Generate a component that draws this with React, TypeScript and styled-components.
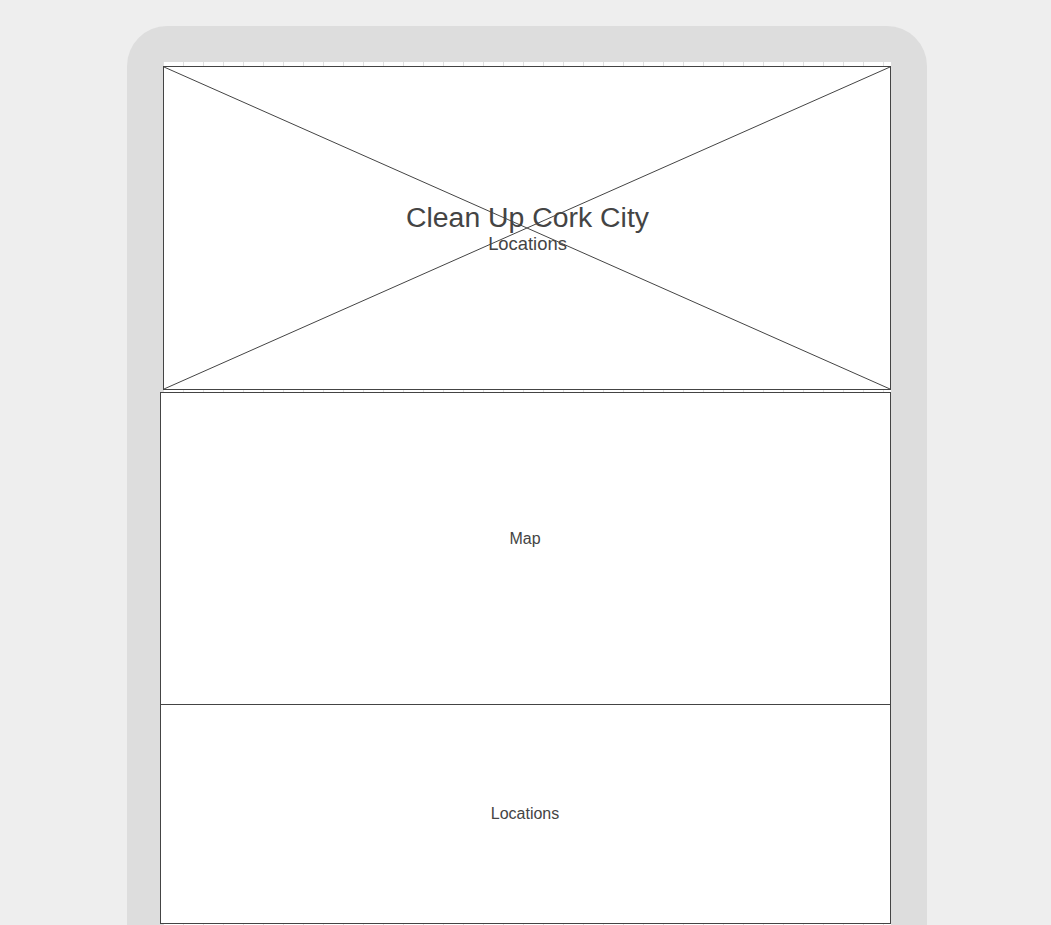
import React from 'react';
import styled, { createGlobalStyle } from 'styled-components';

const GlobalStyle = createGlobalStyle`
  html, body {
    margin: 0;
    padding: 0;
    background: #eeeeee;
    font-family: "Liberation Sans", Arial, sans-serif;
    color: #444444;
  }
`;

const Page = styled.div`
  height: 925px;
  overflow: hidden;
  display: flex;
  justify-content: center;
  padding-top: 26px;
  box-sizing: border-box;
`;

const Device = styled.div`
  width: 800px;
  height: 1000px;
  margin-left: 2px;
  background: #dddddd;
  border-radius: 40px;
  padding: 36px 36px 0 36px;
  box-sizing: border-box;
`;

const Screen = styled.div`
  height: 100%;
  background-color: #ffffff;
  background-image: repeating-linear-gradient(
    to right,
    #e0e0e0 0,
    #e0e0e0 1px,
    transparent 1px,
    transparent 20px
  );
  padding-top: 4px;
  display: flex;
  flex-direction: column;
`;

const Hero = styled.header`
  position: relative;
  height: 324px;
  padding-left: 2px;
  border: 1px solid #444444;
  background: #ffffff;
  display: flex;
  flex-direction: column;
  align-items: center;
  justify-content: center;
  box-sizing: border-box;
`;

const Cross = styled.svg`
  position: absolute;
  inset: 0;
  width: 100%;
  height: 100%;
`;

const Title = styled.h1`
  position: relative;
  margin: 0;
  font-size: 28.4px;
  font-weight: 400;
  line-height: 1.1;
`;

const Subtitle = styled.p`
  position: relative;
  margin: 0;
  font-size: 18.4px;
  line-height: 1.15;
`;

const Panel = styled.section<{ $height: number; $first?: boolean; $lift?: number }>`
  height: ${(p) => p.$height}px;
  margin-left: -3px;
  margin-top: ${(p) => (p.$first ? '2px' : '-1px')};
  padding-bottom: ${(p) => (p.$lift ?? 0) * 2}px;
  border: 1px solid #444444;
  background: #ffffff;
  display: flex;
  align-items: center;
  justify-content: center;
  font-size: 16px;
  box-sizing: border-box;
`;

function App() {
  return (
    <>
      <GlobalStyle />
      <Page>
        <Device>
          <Screen>
            <Hero>
              <Cross viewBox="0 0 100 100" preserveAspectRatio="none">
                <line x1="0" y1="0" x2="100" y2="100" stroke="#444" strokeWidth="1" vectorEffect="non-scaling-stroke" />
                <line x1="100" y1="0" x2="0" y2="100" stroke="#444" strokeWidth="1" vectorEffect="non-scaling-stroke" />
              </Cross>
              <Title>Clean Up Cork City</Title>
              <Subtitle>Locations</Subtitle>
            </Hero>
            <Panel $height={313} $first $lift={10}>Map</Panel>
            <Panel $height={220}>Locations</Panel>
          </Screen>
        </Device>
      </Page>
    </>
  );
}

export default App;
